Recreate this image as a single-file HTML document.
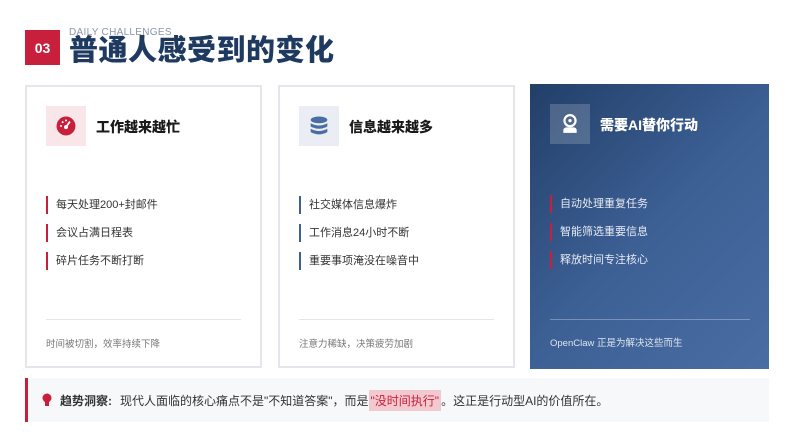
<!DOCTYPE html>
<html><head><meta charset="utf-8"><style>
*{margin:0;padding:0;box-sizing:border-box}
body{width:793px;height:446px;background:#fff;font-family:"Liberation Sans","Noto Sans CJK SC",sans-serif;position:relative;overflow:hidden}
.badge{position:absolute;left:25px;top:30px;width:35px;height:35px;background:#c8203c;color:#fff;font-weight:bold;font-size:14px;display:flex;align-items:center;justify-content:center}
.sub{position:absolute;left:69px;top:27px;font-size:10px;color:#8a96aa;letter-spacing:0.3px}
.title{position:absolute;left:69px;top:33px;font-size:29px;font-weight:900;color:#1f3a60;line-height:36px;letter-spacing:0.5px}
.card{position:absolute;top:85px;height:283px;width:237px;border:2px solid #e4e6ec;background:#fff}
.ib{position:absolute;left:19px;top:19px;width:40px;height:40px;display:flex;align-items:center;justify-content:center}
.ct{position:absolute;left:69px;top:30px;font-size:14px;font-weight:900;color:#1a1a1a}
.li{position:absolute;left:19px;height:18px;border-left:2px solid #c8203c;padding-left:8px;font-size:11px;line-height:18px;color:#333}
.hr{position:absolute;left:19px;right:19px;top:232px;border-top:1px solid #e4e6ec}
.ft{position:absolute;left:19px;top:249px;font-size:9.5px;color:#777}
.c3{border:none;background:linear-gradient(135deg,#223f68,#3c5f94 50%,#4a6ea4)}
.c3 .ct{color:#fff}.c3 .li{color:#e6ebf3}.c3 .ft{color:#dfe5ee}.c3 .hr{border-color:rgba(255,255,255,.3)}
.bar{position:absolute;left:25px;top:378px;width:744px;height:44px;background:#f7f8fa;border-left:3px solid #c8203c;font-size:12px;color:#333;display:flex;align-items:center;padding-left:14px}
.hl{background:#f3c9d0;color:#c8203c;padding:2px 2px}
</style></head><body>
<div class="badge">03</div>
<div class="sub">DAILY CHALLENGES</div>
<div class="title">普通人感受到的变化</div>

<div class="card" style="left:25px">
<div class="ib" style="background:#f8e6e9"><svg width="20" height="20" viewBox="0 0 18 18"><circle cx="9" cy="9" r="8.5" fill="#c8203c"/><circle cx="9" cy="10" r="1.8" fill="#fff"/><path d="M9 10 L12.5 5" stroke="#fff" stroke-width="1.6"/><circle cx="4.5" cy="9" r="0.9" fill="#fff"/><circle cx="6" cy="5.5" r="0.9" fill="#fff"/><circle cx="9" cy="4" r="0.9" fill="#fff"/></svg></div>
<div class="ct">工作越来越忙</div>
<div class="li" style="top:109px">每天处理200+封邮件</div>
<div class="li" style="top:137px">会议占满日程表</div>
<div class="li" style="top:165px">碎片任务不断打断</div>
<div class="hr"></div><div class="ft">时间被切割，效率持续下降</div>
</div>

<div class="card" style="left:278px">
<div class="ib" style="background:#eaeef4"><svg width="18" height="20" viewBox="0 0 16 18"><ellipse cx="8" cy="3.5" rx="7.5" ry="3" fill="#4a6ea4"/><path d="M.5 6.5q7.5 4 15 0v3q-7.5 4-15 0z" fill="#4a6ea4"/><path d="M.5 11.5q7.5 4 15 0v3q-7.5 4-15 0z" fill="#4a6ea4"/></svg></div>
<div class="ct">信息越来越多</div>
<div class="li" style="top:109px;border-color:#3c5f94">社交媒体信息爆炸</div>
<div class="li" style="top:137px;border-color:#3c5f94">工作消息24小时不断</div>
<div class="li" style="top:165px;border-color:#3c5f94">重要事项淹没在噪音中</div>
<div class="hr"></div><div class="ft">注意力稀缺，决策疲劳加剧</div>
</div>

<div class="card c3" style="left:530px;top:84px;height:285px;width:239px">
<div class="ib" style="background:rgba(255,255,255,.18);left:20px;top:20px"><svg width="18" height="20" viewBox="0 0 16 18"><circle cx="8" cy="6" r="5" fill="none" stroke="#fff" stroke-width="2"/><circle cx="8" cy="6" r="1.5" fill="#fff"/><path d="M2 17v-2q0-3 3-3h6q3 0 3 3v2z" fill="#fff"/></svg></div>
<div class="ct" style="left:70px;top:31px">需要AI替你行动</div>
<div class="li" style="top:111px;left:20px">自动处理重复任务</div>
<div class="li" style="top:139px;left:20px">智能筛选重要信息</div>
<div class="li" style="top:167px;left:20px">释放时间专注核心</div>
<div class="hr" style="left:20px;top:235px"></div><div class="ft" style="left:20px;top:251px">OpenClaw 正是为解决这些而生</div>
</div>

<div class="bar"><svg width="10" height="14" viewBox="0 0 10 14" style="margin-right:8px"><circle cx="5" cy="5" r="4.5" fill="#c8203c"/><rect x="3" y="9" width="4" height="4" fill="#c8203c"/></svg><b style="margin-right:8px">趋势洞察:</b>现代人面临的核心痛点不是"不知道答案"，而是<span class="hl">"没时间执行"</span>。这正是行动型AI的价值所在。</div>
</body></html>
